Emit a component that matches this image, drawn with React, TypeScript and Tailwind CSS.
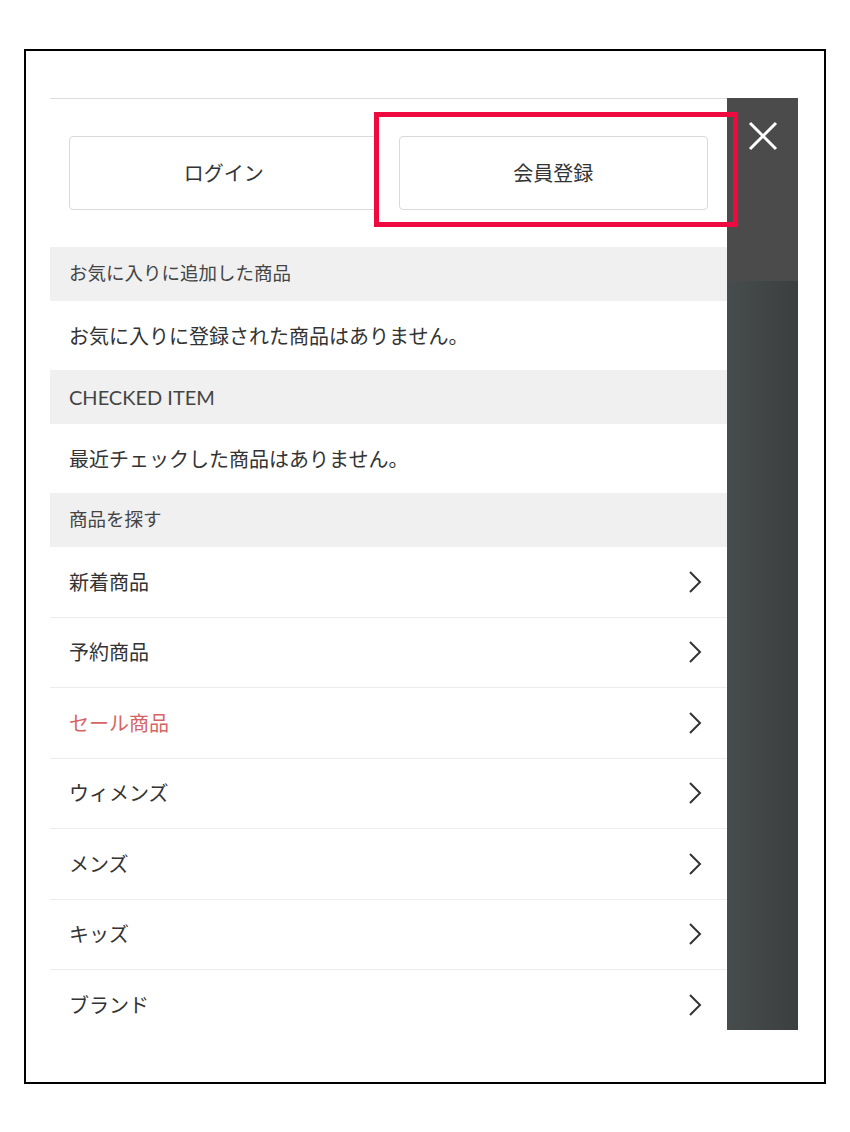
const navItems = [
  { label: '新着商品' },
  { label: '予約商品' },
  { label: 'セール商品', sale: true },
  { label: 'ウィメンズ' },
  { label: 'メンズ' },
  { label: 'キッズ' },
  { label: 'ブランド' },
]

function SectionHeader({ title, latin }: { title: string; latin?: boolean }) {
  return (
    <div
      className={
        'h-[54px] bg-[#f0f0f0] flex items-center px-[19px] text-[#444] ' +
        (latin ? 'text-[20px]' : 'text-[18.5px]')
      }
    >
      {title}
    </div>
  )
}

function EmptyRow({ text }: { text: string }) {
  return (
    <div className="h-[69px] flex items-center px-[19px] text-[20px] text-[#333]">{text}</div>
  )
}

function Chevron() {
  return (
    <svg width="16" height="24" viewBox="0 0 16 24" fill="none" className="text-[#333]">
      <polyline points="3,2 13,12 3,22" stroke="currentColor" strokeWidth="2" />
    </svg>
  )
}

export default function App() {
  return (
    <div
      className="w-[850px] h-[1132px] bg-white pt-[49px] pl-[24px]"
      style={{ fontFamily: 'Lato, "Noto Sans CJK JP", sans-serif' }}
    >
      <div className="relative w-[802px] h-[1035px] border-2 border-black pl-[24px] pt-[47px]">
        <div className="flex">
          {/* drawer */}
          <div className="w-[677px] border-t border-[#dcdcdc]">
            <div className="flex gap-[20px] px-[19px] pt-[37px] pb-[37px]">
              <button className="flex-1 h-[74px] border border-[#d9d9d9] rounded-[4px] text-[20px] text-[#333] bg-white">
                ログイン
              </button>
              <button className="flex-1 h-[74px] border border-[#d9d9d9] rounded-[4px] text-[20px] text-[#333] bg-white">
                会員登録
              </button>
            </div>

            <SectionHeader title="お気に入りに追加した商品" />
            <EmptyRow text="お気に入りに登録された商品はありません。" />
            <SectionHeader title="CHECKED ITEM" latin />
            <EmptyRow text="最近チェックした商品はありません。" />
            <SectionHeader title="商品を探す" />

            <ul>
              {navItems.map((item, i) => (
                <li
                  key={item.label}
                  className={
                    'h-[70.5px] flex items-center justify-between pl-[19px] pr-[24px] text-[20px] ' +
                    (i < navItems.length - 1 ? 'border-b border-[#ececec] ' : '') +
                    (item.sale ? 'text-[#d66464]' : 'text-[#333]')
                  }
                >
                  <span>{item.label}</span>
                  <Chevron />
                </li>
              ))}
            </ul>
          </div>

          {/* overlay bar */}
          <div className="w-[71px] h-[932px] flex flex-col">
            <div className="h-[183px] bg-[#4b4b4b] flex justify-center pt-[22px]">
              <svg width="32" height="32" viewBox="0 0 32 32" className="text-white">
                <path d="M3 3 L29 29 M29 3 L3 29" stroke="currentColor" strokeWidth="3" />
              </svg>
            </div>
            <div className="flex-1 bg-gradient-to-r from-[#474c4c] to-[#3b3f3f]" />
          </div>
        </div>

        {/* annotation */}
        <div className="absolute left-[348px] top-[61px] w-[364px] h-[115px] border-[5px] border-[#ee0a3f]" />
      </div>
    </div>
  )
}
